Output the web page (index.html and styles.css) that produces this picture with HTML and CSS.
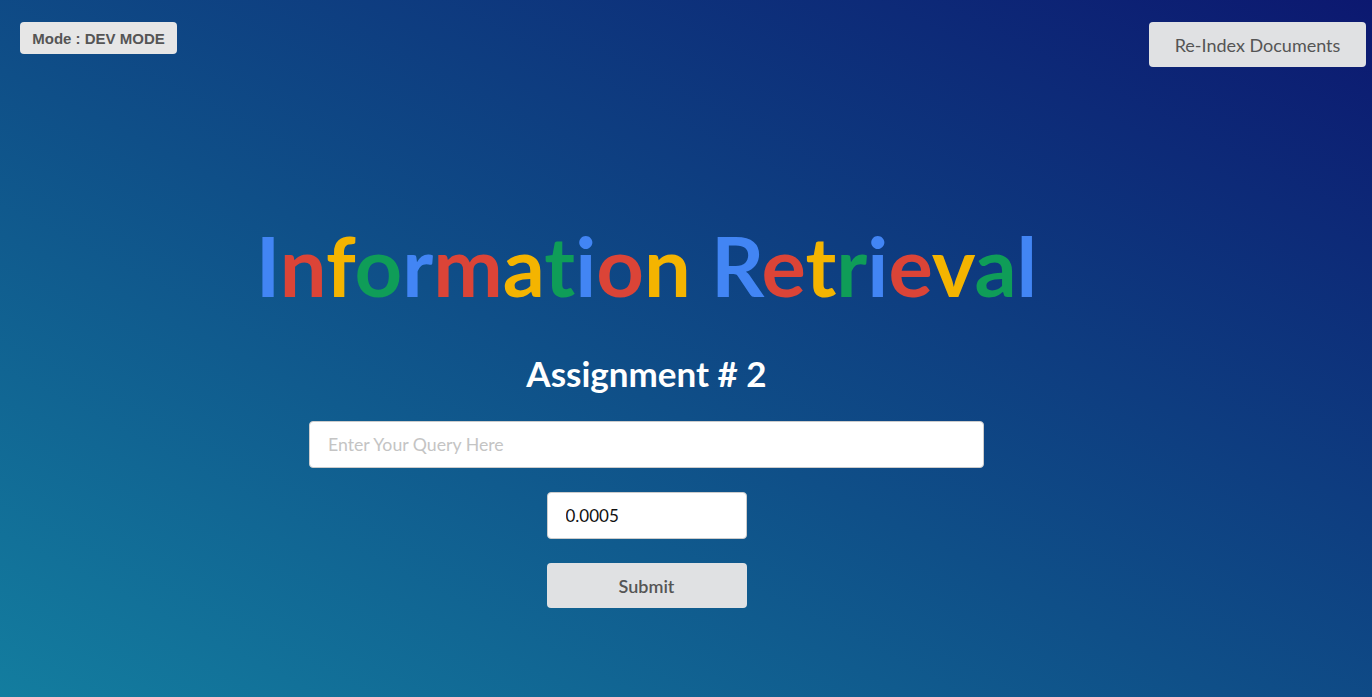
FILE: index.html
```html
<!DOCTYPE html>
<html>
<head>
<meta charset="utf-8">
<link rel="stylesheet" href="styles.css">
</head>
<body>
<div class="page">
  <header class="topbar">
    <span class="mode">Mode : DEV MODE</span>
    <button class="reindex">Re-Index Documents</button>
  </header>
  <main class="main">
    <h1 class="title"><span class="b">I</span><span class="r">n</span><span class="y">f</span><span class="g">o</span><span class="b">r</span><span class="r">m</span><span class="y">a</span><span class="g">t</span><span class="b">i</span><span class="r">o</span><span class="y">n</span> <span class="b">R</span><span class="r">e</span><span class="y">t</span><span class="g">r</span><span class="b">i</span><span class="r">e</span><span class="y">v</span><span class="g">a</span><span class="b">l</span></h1>
    <h2 class="subtitle">Assignment # 2</h2>
    <form class="form">
      <input class="query" type="text" placeholder="Enter Your Query Here">
      <input class="num" type="text" value="0.0005">
      <button class="submit" type="button">Submit</button>
    </form>
  </main>
</div>
</body>
</html>
```

FILE: styles.css
```css
* { box-sizing: border-box; }
html, body { margin: 0; height: 100%; }
body {
  font-family: Lato, "Liberation Sans", sans-serif;
  background: linear-gradient(to top right, #137d9f 0%, #0f4f88 45%, #0c1870 100%);
  overflow: hidden;
}
.page { height: 697px; display: flex; flex-direction: column; }
.topbar {
  display: flex;
  justify-content: space-between;
  align-items: flex-start;
  padding: 22px 6px 0 20px;
}
.mode {
  font-family: "Liberation Sans", Arial, sans-serif;
  font-weight: 700;
  font-size: 15px;
  color: #555;
  background: #e6e6e6;
  border-radius: 4px;
  height: 32px;
  width: 157px;
  display: flex;
  align-items: center;
  justify-content: center;
}
.reindex {
  font-family: Lato, sans-serif;
  font-size: 18px;
  color: #555;
  background: #e0e1e3;
  border: none;
  border-radius: 4px;
  width: 217px;
  height: 45px;
  padding: 0;
}
.main {
  display: flex;
  flex-direction: column;
  align-items: center;
  padding-right: 79px;
  padding-top: 157px;
}
.title {
  margin: 0;
  font-size: 83px;
  font-weight: 700;
  line-height: 1;
  font-variant-ligatures: none;
  font-feature-settings: "liga" 0, "dlig" 0;
}
.b { color: #4285f4; }
.r { color: #db4437; }
.y { color: #f4b400; }
.g { color: #0f9d58; }
.subtitle {
  margin: 46px 0 0;
  font-size: 35px;
  font-weight: 700;
  color: #fff;
  line-height: 40px;
}
.form {
  display: flex;
  flex-direction: column;
  align-items: center;
  margin-top: 28px;
}
.query, .num {
  font-family: Lato, sans-serif;
  font-size: 17px;
  border: 1px solid #ccc;
  border-radius: 4px;
  background: #fff;
  height: 47px;
  padding: 0 18px;
  color: #111;
  outline: none;
}
.query { width: 675px; font-size: 17.7px; }
.query::placeholder { color: #c4c4c4; }
.num { width: 200px; margin-top: 24px; }
.submit {
  margin-top: 24px;
  width: 200px;
  height: 45px;
  border: none;
  border-radius: 4px;
  background: #e0e1e3;
  color: #555;
  font-family: Lato, sans-serif;
  font-weight: 600;
  font-size: 18px;
}
```
